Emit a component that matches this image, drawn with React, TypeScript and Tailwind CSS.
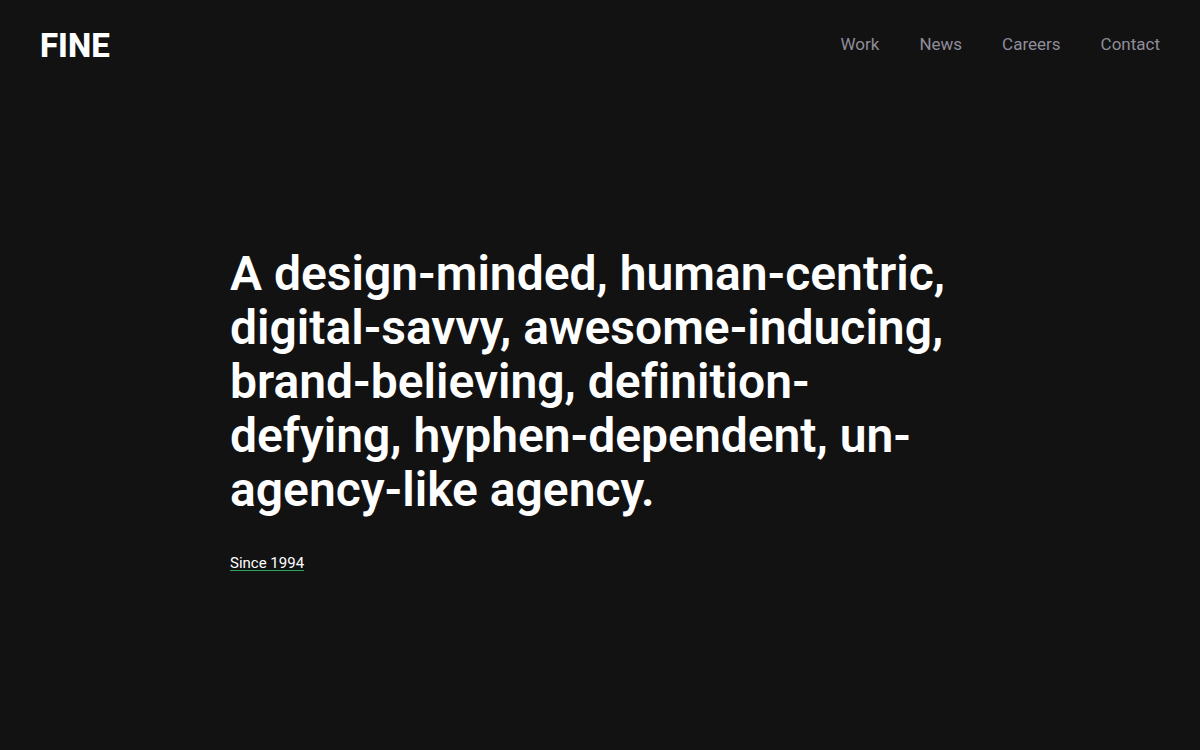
const links = ["Work", "News", "Careers", "Contact"];

export default function App() {
  return (
    <div className="flex min-h-screen flex-col bg-[#121212] font-['Roboto','Liberation_Sans',sans-serif] text-white">
      <header className="flex items-start justify-between px-10 pt-[26px] pb-[22px]">
        <a href="#home" className="text-[33px] leading-10 font-extrabold">
          FINE
        </a>
        <nav aria-label="Main" className="flex gap-10 text-[17px] leading-9 text-[#8f8d99]">
          {links.map((label) => (
            <a key={label} href={`#${label.toLowerCase()}`} className="hover:text-white">
              {label}
            </a>
          ))}
        </nav>
      </header>
      <main className="flex flex-1 flex-col items-center justify-center px-10 pb-4">
        <div className="w-full max-w-[740px]">
          <h1 className="text-[48px] leading-[54px] font-semibold [font-variant-ligatures:none]">
            A design-minded, human-centric, digital-savvy, awesome-inducing, brand-believing,
            definition-defying, hyphen-dependent, un-agency-like agency.
          </h1>
          <p className="mt-[34px] text-[15px] leading-6">
            <a
              href="#about"
              className="underline decoration-[#2fa45c] decoration-1 underline-offset-2 [text-decoration-skip-ink:none]"
            >
              Since 1994
            </a>
          </p>
        </div>
      </main>
    </div>
  );
}
